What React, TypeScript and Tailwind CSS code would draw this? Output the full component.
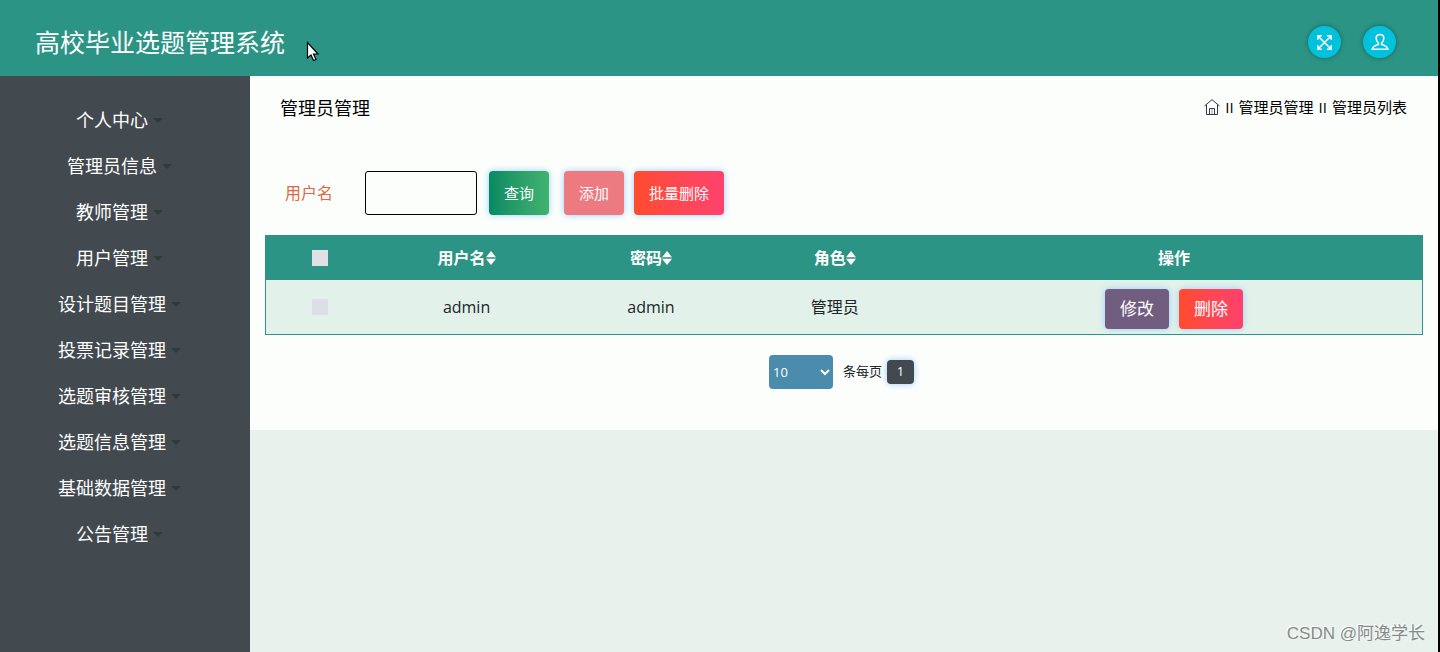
import { useState } from 'react';

const menuItems = [
  '个人中心',
  '管理员信息',
  '教师管理',
  '用户管理',
  '设计题目管理',
  '投票记录管理',
  '选题审核管理',
  '选题信息管理',
  '基础数据管理',
  '公告管理',
];

const users = [{ id: 1, username: 'admin', password: 'admin', role: '管理员' }];

function SortIcon() {
  return (
    <svg width="10" height="14" viewBox="0 0 10 14" fill="currentColor" className="inline-block align-[-1px]" aria-hidden="true">
      <path d="M5 0 10 6.300H0zM5 14 0 7.700h10z" />
    </svg>
  );
}

function ExpandIcon() {
  return (
    <svg width="15" height="15" viewBox="0 0 15 15" fill="none" stroke="currentColor" strokeWidth="1.5" aria-hidden="true">
      <path d="M1 1l13 13M14 1L1 14M.8 5V.8H5M10 .8h4.200V5M14.200 10v4.200H10M5 14.200H.8V10" />
    </svg>
  );
}

function UserIcon() {
  return (
    <svg width="18" height="18" viewBox="0 0 18 18" fill="none" stroke="currentColor" strokeWidth="1.6" aria-hidden="true">
      <path d="M9 1.500c2.600 0 3.800 1.500 3.800 3.800 0 2-.8 3.800-2.200 4.700v1.500c2.400.6 5.900 1.600 6.200 4.700H1.200c.3-3.100 3.800-4.100 6.200-4.700V10C6 9.100 5.200 7.300 5.200 5.300 5.200 3 6.400 1.500 9 1.500z" />
    </svg>
  );
}

function HomeIcon() {
  return (
    <svg width="16" height="16" viewBox="0 0 16 16" fill="none" stroke="#343a46" aria-hidden="true">
      <path d="M.5 7 8 .7 15.500 7M2.500 5.500v10h11v-10M5.500 15.500v-6h5v6" />
      <path d="M8 10v5" stroke="#9aa0a6" />
    </svg>
  );
}

export default function App() {
  const [name, setName] = useState('');
  const [pageSize, setPageSize] = useState('10');
  const [checked, setChecked] = useState(false);

  return (
    <div className="relative flex min-h-screen flex-col border-r-2 border-black bg-[#e8f1ec] font-['Open_Sans','Noto_Sans_CJK_SC',sans-serif] text-[#212529]">
      <header className="flex h-[76px] items-center justify-between bg-[#2c9485] pt-2 pr-[42px] pl-[35px] text-white">
        <h1 className="text-[25px] leading-8">高校毕业选题管理系统</h1>
        <div className="flex gap-[22px]">
          <button className="flex h-8 w-[33px] items-center justify-center rounded-full bg-[#00c2dc] shadow-[0_0_5px_rgba(0,0,0,0.35)]" aria-label="全屏">
            <ExpandIcon />
          </button>
          <button className="flex h-8 w-[33px] items-center justify-center rounded-full bg-[#00c2dc] shadow-[0_0_5px_rgba(0,0,0,0.35)]" aria-label="用户">
            <UserIcon />
          </button>
        </div>
      </header>

      <div className="flex flex-1">
        <nav className="w-[250px] shrink-0 bg-[#424a50] pt-[21px] pr-[11px]">
          <ul>
            {menuItems.map(item => (
              <li key={item}>
                <a href="#" className="flex h-[46px] items-center justify-center gap-[5px] text-[18px] leading-6 text-white">
                  {item}
                  <span className="border-x-5 border-t-5 border-x-transparent border-t-[#2f3a3b]" />
                </a>
              </li>
            ))}
          </ul>
        </nav>

        <main className="min-w-0 flex-1">
          <div className="bg-[#fbfefb] px-[15px] pb-[41px]">
            {/* Title and breadcrumb */}
            <div className="flex h-16 items-center justify-between pr-4 pl-[15px] text-black">
              <h2 className="text-[18px] leading-6">管理员管理</h2>
              <div className="flex items-center gap-[5px] pb-[2px] text-[15px] leading-6">
                <a href="#" aria-label="首页"><HomeIcon /></a>
                <span>II</span>
                <a href="#">管理员管理</a>
                <span>II</span>
                <span>管理员列表</span>
              </div>
            </div>

            {/* Search form */}
            <form className="mt-[31px] flex h-11 items-center pl-5 text-[15px] text-white" onSubmit={e => e.preventDefault()}>
              <label htmlFor="username" className="w-20 text-[16px] text-[#e06745]">用户名</label>
              <input
                id="username"
                value={name}
                onChange={e => setName(e.target.value)}
                className="h-11 w-28 rounded-[3px] border border-black px-3 text-black"
              />
              <button className="ml-3 h-11 rounded bg-linear-to-r from-[#048a62] to-[#40b370] px-[15px] shadow-[0_0_6px_#9accff]">查询</button>
              <button type="button" className="ml-[15px] h-11 rounded bg-[#ed7a81] px-[15px] shadow-[0_0_6px_#9accff]">添加</button>
              <button type="button" className="ml-[10px] h-11 rounded bg-linear-to-r from-[#ff4b2b] to-[#ff416c] px-[15px] shadow-[0_0_6px_#9accff]">批量删除</button>
            </form>

            <table className="mt-5 w-full table-fixed border-separate border-spacing-0 border border-[#2c9485] text-center text-[16px] leading-6">
              <thead className="bg-[#2c9485] text-white">
                <tr className="h-11">
                  <th className="w-[9.4%]">
                    <input type="checkbox" aria-label="全选" checked={checked} onChange={e => setChecked(e.target.checked)} className="mx-auto block size-4 appearance-none bg-[#dee2e6] checked:bg-[#4b8bab]" />
                  </th>
                  <th className="w-[15.9%]">用户名<SortIcon /></th>
                  <th className="w-[16%]">密码<SortIcon /></th>
                  <th className="w-[15.8%]">角色<SortIcon /></th>
                  <th>操作</th>
                </tr>
              </thead>
              <tbody className="bg-[#e2f2ea]">
                {users.map(user => (
                  <tr key={user.id} className="h-[54px]">
                    <td>
                      <input type="checkbox" aria-label={user.username} checked={checked} onChange={e => setChecked(e.target.checked)} className="mx-auto block size-4 appearance-none bg-[#dcdfe5] checked:bg-[#4b8bab]" />
                    </td>
                    <td>{user.username}</td>
                    <td>{user.password}</td>
                    <td>{user.role}</td>
                    <td>
                      <div className="flex justify-center gap-[10px] pt-1 text-[17px] text-white">
                        <button className="h-10 rounded bg-[#715d80] px-[15px] shadow-[0_0_6px_#9accff]">修改</button>
                        <button className="h-10 rounded bg-linear-to-r from-[#ff4b2b] to-[#ff416c] px-[15px] shadow-[0_0_6px_#9accff]">删除</button>
                      </div>
                    </td>
                  </tr>
                ))}
              </tbody>
            </table>

            {/* Pagination */}
            <div className="mt-5 flex h-[34px] items-center justify-center pr-[5px] text-[13px]">
              <select
                id="page-size"
                value={pageSize}
                onChange={e => setPageSize(e.target.value)}
                className="h-[34px] w-16 rounded bg-[#4b8bab] text-white"
              >
                <option>10</option>
                <option>25</option>
                <option>50</option>
              </select>
              <label htmlFor="page-size" className="ml-[10px]">条每页</label>
              <button className="ml-[5px] h-6 w-[27px] rounded bg-[#424a50] text-white shadow-[0_0_6px_#9accff]">1</button>
            </div>
          </div>
        </main>
      </div>

      <svg className="absolute top-[41px] left-[306px]" width="14" height="21" viewBox="0 0 14 21" fill="white" stroke="black" strokeWidth="1.2" aria-hidden="true">
        <path d="M1.500 1.500v15.500l3.500-3 2.500 5.500 2.500-1-2.500-5.500H12z" />
      </svg>
      <p className="absolute right-[13px] bottom-[6px] font-['Liberation_Sans','Noto_Sans_CJK_SC',sans-serif] text-[17px] leading-6 text-[#858b88] [text-shadow:-1px_-1px_0_#fff]">CSDN @阿逸学长</p>
    </div>
  );
}
